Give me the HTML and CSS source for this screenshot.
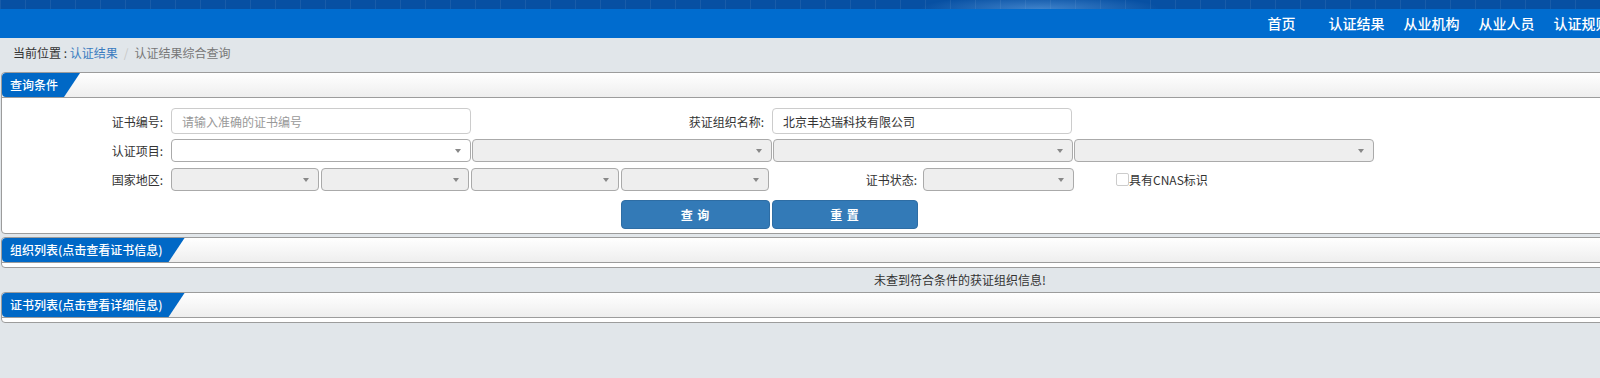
FILE: index.html
```html
<!DOCTYPE html>
<html lang="zh-CN">
<head>
  <meta charset="UTF-8" />
  <meta name="viewport" content="width=device-width, initial-scale=1.0"/>
  <title>认证结果综合查询</title>
  <link rel="stylesheet" href="styles.css">
</head>
<body>
  <div class="page">
    <div class="top-band"></div>
    <div class="nav-bar">
      <ul class="nav">
        <li>首页</li>
        <li>认证结果</li>
        <li>从业机构</li>
        <li>从业人员</li>
        <li>认证规则</li>
      </ul>
    </div>

    <div class="crumb">
      当前位置 : <a href="#">认证结果</a><span class="sep">/</span><span class="cur">认证结果综合查询</span>
    </div>

    <div class="panel">
      <div class="panel-head"><span class="tab">查询条件</span></div>
      <div class="form">
        <div class="row row-1">
          <span class="lbl">证书编号:</span>
          <input class="txt" type="text" placeholder="请输入准确的证书编号">
          <span class="lbl lbl-wide">获证组织名称:</span>
          <input class="txt" type="text" value="北京丰达瑞科技有限公司">
        </div>
        <div class="row row-2">
          <span class="lbl">认证项目:</span>
          <div class="sel white"></div>
          <div class="sel"></div>
          <div class="sel"></div>
          <div class="sel"></div>
        </div>
        <div class="row row-3">
          <span class="lbl">国家地区:</span>
          <div class="sel half"></div>
          <div class="sel half"></div>
          <div class="sel half"></div>
          <div class="sel half"></div>
          <span class="lbl lbl-state">证书状态:</span>
          <div class="sel state"></div>
          <label class="chk"><span class="box"></span>具有CNAS标识</label>
        </div>
        <div class="row btn-row">
          <button class="btn btn-query">查 询</button>
          <button class="btn btn-reset">重 置</button>
        </div>
      </div>
    </div>

    <div class="panel">
      <div class="panel-head"><span class="tab">组织列表(点击查看证书信息)</span></div>
      <div class="panel-body"></div>
    </div>
    <div class="empty">未查到符合条件的获证组织信息!</div>

    <div class="panel">
      <div class="panel-head"><span class="tab">证书列表(点击查看详细信息)</span></div>
      <div class="panel-body"></div>
    </div>
  </div>
</body>
</html>
```

FILE: styles.css
```css
html, body {
  margin: 0;
  padding: 0;
  overflow: hidden;
  background: #e1e6ea;
}

body {
  font-family: "Noto Sans CJK SC", "Liberation Sans", sans-serif;
  font-size: 12px;
  color: #333;
}

.page {
  width: 1920px;
}

/* bandeau du haut */
.top-band {
  height: 9px;
  background:
    radial-gradient(ellipse 120px 14px at 1040px 9px, rgba(120, 180, 240, 0.5), rgba(120, 180, 240, 0) 100%),
    repeating-linear-gradient(90deg, rgba(255, 255, 255, 0.07) 0 1px, transparent 1px 25px),
    #0750a3;
}

.nav-bar {
  height: 29px;
  background: #006ccf;
}

.nav {
  list-style: none;
  margin: 0;
  padding: 0 0 0 1244px;
  display: flex;
}

.nav li {
  flex: 0 0 75px;
  text-align: center;
  line-height: 29px;
  font-size: 14px;
  font-weight: 500;
  color: #fff;
}

.crumb {
  height: 34px;
  line-height: 30px;
  padding-left: 13px;
  color: #333;
}

.crumb a {
  color: #3a7cc0;
  text-decoration: none;
}

.crumb .sep {
  color: #c8c8c8;
  margin: 0 6px;
}

.crumb .cur {
  color: #777;
}

.panel {
  margin-left: 1px;
  background: #fff;
  border: 1px solid #9c9c9c;
  border-radius: 4px;
}

.panel + .panel {
  margin-top: 3px;
}

.panel-head {
  height: 24px;
  border-bottom: 1px solid #9c9c9c;
  background: linear-gradient(#ffffff, #eeeeee);
  border-radius: 4px 4px 0 0;
}

.tab {
  display: inline-block;
  height: 24px;
  line-height: 24px;
  padding: 0 22px 0 8px;
  background: #0068c6;
  color: #fff;
  font-weight: 500;
  border-radius: 4px 0 0 4px;
  clip-path: polygon(0 0, 100% 0, calc(100% - 16px) 100%, 0 100%);
}

.panel-body {
  height: 4px;
}

.form {
  padding: 10px 0 4px;
}

.row {
  display: flex;
  align-items: center;
}

.lbl {
  flex: 0 0 169px;
  box-sizing: border-box;
  padding-right: 8px;
  text-align: right;
  color: #333;
}

.lbl-wide {
  flex-basis: 301px;
}

.lbl-state {
  flex-basis: 152px;
  padding-right: 6px;
}

.row-1 {
  height: 26px;
  margin-bottom: 5px;
}

.txt {
  width: 300px;
  height: 26px;
  box-sizing: border-box;
  border: 1px solid #ccc;
  border-radius: 4px;
  padding: 0 10px;
  font-family: inherit;
  font-size: 12px;
  color: #333;
  outline: none;
}

.txt::placeholder {
  color: #999;
}

.row-2 {
  height: 23px;
  margin-bottom: 6px;
  gap: 1px;
}

.row-2 .lbl {
  margin-right: -1px;
}

.sel {
  position: relative;
  width: 300px;
  height: 23px;
  box-sizing: border-box;
  border: 1px solid #aaa;
  border-radius: 4px;
  background: #eee;
}

.sel.white {
  background: #fff;
}

.sel::after {
  content: "";
  position: absolute;
  right: 9px;
  top: 9px;
  border-left: 3px solid transparent;
  border-right: 3px solid transparent;
  border-top: 4px solid #888;
}

.row-3 {
  height: 23px;
  margin-bottom: 9px;
  gap: 2px;
}

.row-3 .lbl {
  margin-right: -2px;
}

.sel.half {
  width: 148px;
}

.sel.state {
  width: 151px;
}

.chk {
  display: flex;
  align-items: center;
  margin-left: 40px;
  color: #333;
}

.chk .box {
  width: 11px;
  height: 11px;
  border: 1px solid #ccc;
  border-radius: 2px;
  background: #fff;
}

.btn-row {
  padding-left: 619px;
  gap: 2px;
}

.btn {
  height: 29px;
  border: 1px solid #2e6da4;
  border-radius: 4px;
  background: #337ab7;
  color: #fff;
  font-family: inherit;
  font-size: 12px;
  font-weight: bold;
  letter-spacing: 1px;
  cursor: pointer;
}

.btn-query {
  width: 149px;
}

.btn-reset {
  width: 146px;
}

.empty {
  height: 24px;
  line-height: 24px;
  text-align: center;
  color: #333;
}
```
